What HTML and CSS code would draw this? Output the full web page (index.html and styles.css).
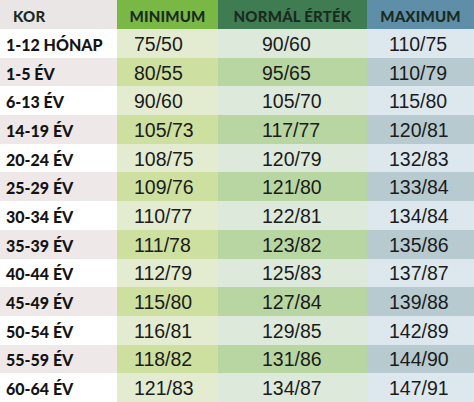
FILE: index.html
```html
<!DOCTYPE html>
<html lang="hu">
<head>
<meta charset="utf-8">
<title>Vérnyomás táblázat</title>
<link rel="stylesheet" href="styles.css">
</head>
<body>
<div class="table">
  <div class="row head">
    <div class="c age">KOR</div>
    <div class="c min">MINIMUM</div>
    <div class="c norm">NORMÁL ÉRTÉK</div>
    <div class="c max">MAXIMUM</div>
  </div>
  <div class="row odd"><div class="c age">1-12 HÓNAP</div><div class="c min">75/50</div><div class="c norm">90/60</div><div class="c max">110/75</div></div>
  <div class="row even"><div class="c age">1-5 ÉV</div><div class="c min">80/55</div><div class="c norm">95/65</div><div class="c max">110/79</div></div>
  <div class="row odd"><div class="c age">6-13 ÉV</div><div class="c min">90/60</div><div class="c norm">105/70</div><div class="c max">115/80</div></div>
  <div class="row even"><div class="c age">14-19 ÉV</div><div class="c min">105/73</div><div class="c norm">117/77</div><div class="c max">120/81</div></div>
  <div class="row odd"><div class="c age">20-24 ÉV</div><div class="c min">108/75</div><div class="c norm">120/79</div><div class="c max">132/83</div></div>
  <div class="row even"><div class="c age">25-29 ÉV</div><div class="c min">109/76</div><div class="c norm">121/80</div><div class="c max">133/84</div></div>
  <div class="row odd"><div class="c age">30-34 ÉV</div><div class="c min">110/77</div><div class="c norm">122/81</div><div class="c max">134/84</div></div>
  <div class="row even"><div class="c age">35-39 ÉV</div><div class="c min">111/78</div><div class="c norm">123/82</div><div class="c max">135/86</div></div>
  <div class="row odd"><div class="c age">40-44 ÉV</div><div class="c min">112/79</div><div class="c norm">125/83</div><div class="c max">137/87</div></div>
  <div class="row even"><div class="c age">45-49 ÉV</div><div class="c min">115/80</div><div class="c norm">127/84</div><div class="c max">139/88</div></div>
  <div class="row odd"><div class="c age">50-54 ÉV</div><div class="c min">116/81</div><div class="c norm">129/85</div><div class="c max">142/89</div></div>
  <div class="row even"><div class="c age">55-59 ÉV</div><div class="c min">118/82</div><div class="c norm">131/86</div><div class="c max">144/90</div></div>
  <div class="row odd"><div class="c age">60-64 ÉV</div><div class="c min">121/83</div><div class="c norm">134/87</div><div class="c max">147/91</div></div>
</div>
</body>
</html>
```
FILE: styles.css
```css
html, body {
  margin: 0;
  padding: 0;
  background: #ffffff;
}
.table {
  width: 474px;
  height: 402px;
  display: flex;
  flex-direction: column;
}
.row {
  display: grid;
  grid-template-columns: 117px 101px 149px 107px;
  flex: 1 1 0;
  min-height: 0;
}
.row.head {
  flex: 0 0 29px;
}
.c {
  display: flex;
  align-items: center;
  padding-top: 2px;
  box-sizing: border-box;
  font-family: "Liberation Sans", Arial, sans-serif;
  font-size: 19.5px;
  color: #1b1b1b;
  white-space: nowrap;
}
.row .min { padding-left: 17px; }
.row .norm { padding-left: 44px; }
.row .max { padding-left: 22px; }
.row .age {
  padding-left: 6px;
  font-family: "Lato", "Liberation Sans", sans-serif;
  font-weight: 900;
  font-size: 16px;
  color: #141414;
}
.head .c {
  justify-content: center;
  padding-left: 0;
  padding-top: 3px;
  font-family: "Lato", "Liberation Sans", sans-serif;
  font-weight: 900;
  font-size: 15px;
  color: #1b2a20;
  letter-spacing: 0.2px;
}
.head .age { justify-content: flex-start; padding-left: 13px; background: #ebe6e6; }
.head .min { background: #7ab845; }
.head .norm { background: #3f7c52; }
.head .max { background: #5f8ea8; }

.odd .age { background: #ffffff; }
.odd .min { background: #e3ecd0; }
.odd .norm { background: #dde9da; }
.odd .max { background: #dce8ee; }

.even .age { background: #efe8e8; }
.even .min { background: #cde09f; }
.even .norm { background: #b8d6a1; }
.even .max { background: #b6cad0; }
```
